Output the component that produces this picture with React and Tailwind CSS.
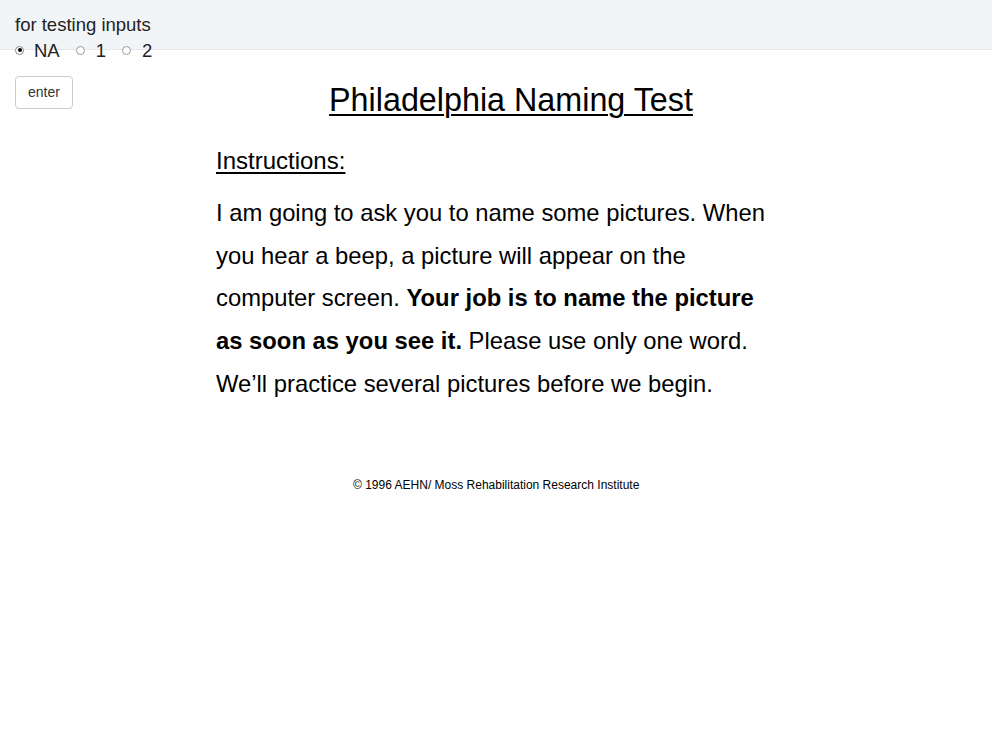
export default function App() {
  return (
    <div className="min-h-screen bg-white font-['Liberation_Sans',Arial,sans-serif] text-black">
      {/* testing bar */}
      <div className="h-[50px] bg-[#f2f5f8] border-b border-[#e4e7eb] pl-[15px] pt-[12px] text-[#222] text-[18.5px] leading-[25px]">
        <div>for testing inputs</div>
        <div className="flex items-center h-[26px]">
          <label className="flex items-center mr-[16px]">
            <span className="w-[9px] h-[9px] rounded-full border border-[#888] bg-white flex items-center justify-center mr-[10px]">
              <span className="w-[4px] h-[4px] rounded-full bg-black" />
            </span>
            NA
          </label>
          <label className="flex items-center mr-[16px]">
            <span className="w-[9px] h-[9px] rounded-full border border-[#999] bg-white mr-[11px]" />
            1
          </label>
          <label className="flex items-center">
            <span className="w-[9px] h-[9px] rounded-full border border-[#999] bg-white mr-[11px]" />
            2
          </label>
        </div>
      </div>

      <div className="flex pl-[15px]">
        <div className="w-[201px] shrink-0 pt-[26px]">
          <button className="h-[33px] px-[12px] border border-[#ccc] rounded-[4px] bg-white text-[14px] text-[#333]">
            enter
          </button>
        </div>

        <div className="w-[590px] pt-[32px]">
          <h1 className="text-center text-[32.3px] leading-[36px] underline underline-offset-[3px] decoration-[2px]">
            Philadelphia Naming Test
          </h1>
          <h2 className="mt-[29px] text-[24px] leading-[28px] underline underline-offset-[3px] decoration-[1.5px]">
            Instructions:
          </h2>
          <p className="mt-[17px] text-[23.8px] leading-[42.7px] w-[556px]">
            I am going to ask you to name some pictures. When you hear a beep, a picture will appear on the
            computer screen. <b>Your job is to name the picture as soon as you see it.</b> Please use only one
            word. We’ll practice several pictures before we begin.
          </p>
          <div className="mt-[72px] ml-[137px] text-[12px] leading-[14px]">
            © 1996 AEHN/ Moss Rehabilitation Research Institute
          </div>
        </div>
      </div>
    </div>
  )
}
